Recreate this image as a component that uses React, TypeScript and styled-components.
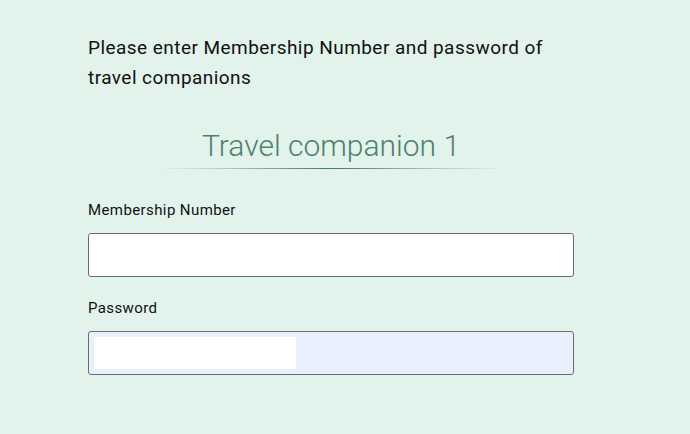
import styled, { createGlobalStyle } from "styled-components"

const Global = createGlobalStyle`
  html, body {
    margin: 0;
    padding: 0;
    background: #e2f3ec;
    font-family: Roboto, "Liberation Sans", sans-serif;
    color: #111;
  }
`

const Page = styled.main`
  width: 486px;
  padding: 33px 0 0 88px;
`

const Intro = styled.p`
  margin: 0;
  font-size: 19px;
  letter-spacing: 0.45px;
  line-height: 30px;
`

const Heading = styled.div`
  display: flex;
  flex-direction: column;
  align-items: center;
  margin-top: 34px;

  h2 {
    margin: 0;
    font-size: 30px;
    font-weight: 300;
    line-height: 38px;
    color: #4f806d;
  }
`

const Divider = styled.hr`
  width: 330px;
  height: 1px;
  margin: 3px 0 0;
  border: 0;
  background: linear-gradient(
    to right,
    rgba(79, 128, 109, 0.05),
    rgba(79, 128, 109, 0.4) 20%,
    #3f7a63 50%,
    rgba(79, 128, 109, 0.4) 80%,
    rgba(79, 128, 109, 0.05)
  );
`

const Field = styled.div<{ $top: number }>`
  display: flex;
  flex-direction: column;
  gap: 14px;
  margin-top: ${(p) => p.$top}px;

  label {
    font-size: 15px;
    letter-spacing: 0.4px;
    line-height: 18px;
  }
`

const Input = styled.div<{ $filled?: boolean }>`
  box-sizing: border-box;
  height: 44px;
  border: 1px solid #6b6b6b;
  border-radius: 3px;
  background: ${(p) => (p.$filled ? "#e8f0fe" : "#fff")};
  padding: 5px;
`

const Autofill = styled.div`
  width: 202px;
  height: 100%;
  background: #fff;
`

export default function App() {
  return (
    <>
      <Global />
      <Page>
        <Intro>
          Please enter Membership Number and password of travel companions
        </Intro>

        <Heading>
          <h2>Travel companion 1</h2>
          <Divider />
        </Heading>

        <Field $top={32}>
          <label>Membership Number</label>
          <Input />
        </Field>

        <Field $top={22}>
          <label>Password</label>
          <Input $filled>
            <Autofill />
          </Input>
        </Field>
      </Page>
    </>
  )
}
